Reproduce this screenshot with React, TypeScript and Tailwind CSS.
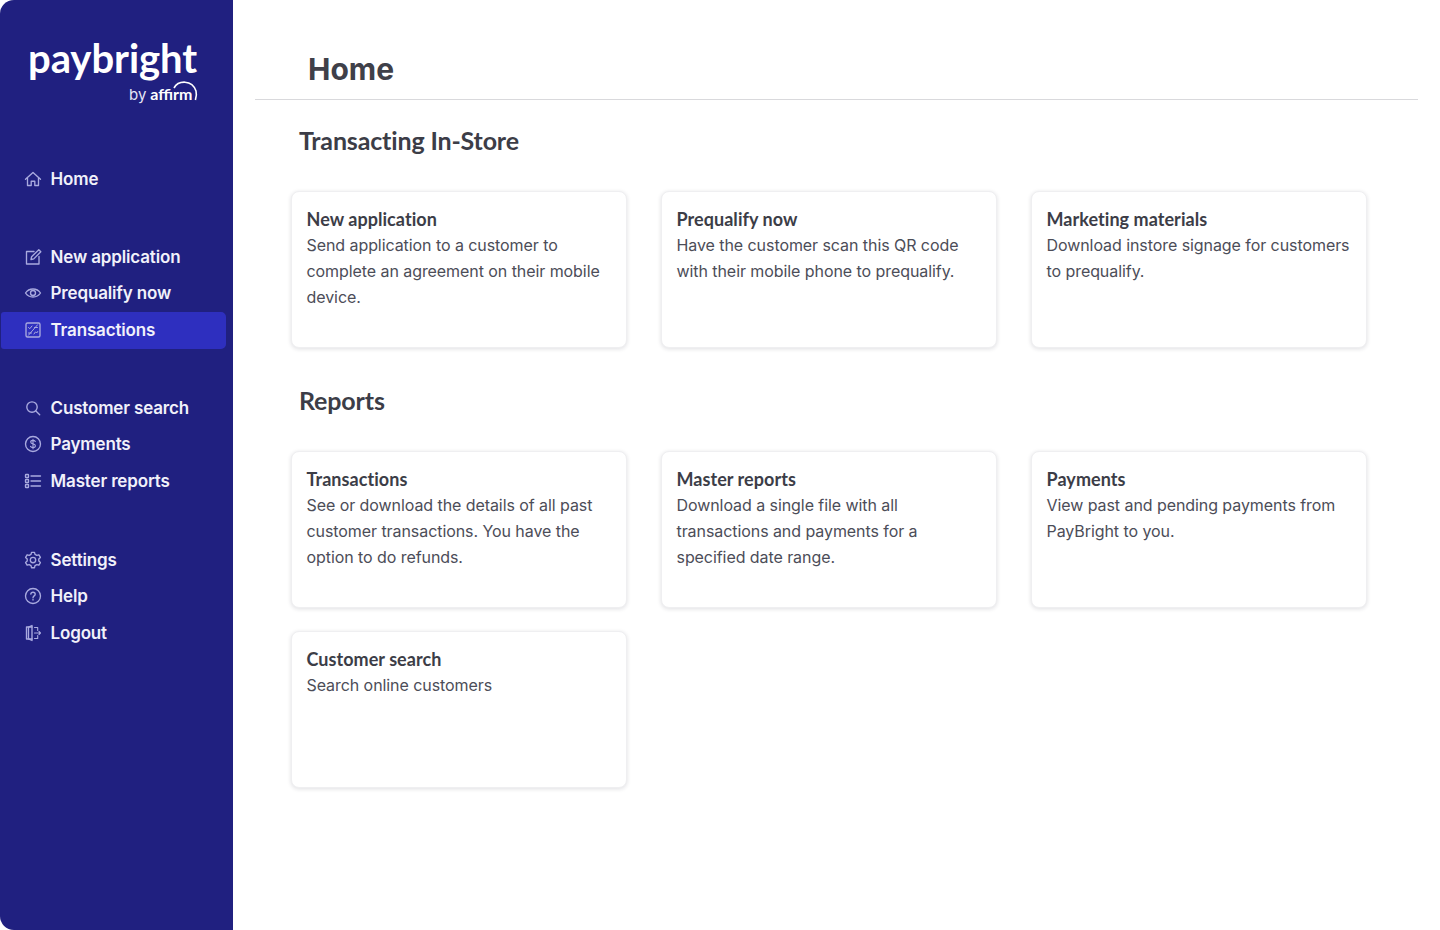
import React from 'react';

const sans = "font-['Inter','Liberation_Sans',sans-serif]";

// outline icons redrawn from the sidebar, 18px box
function NavIcon({ name }: { name: string }) {
  const paths: Record<string, React.ReactNode> = {
    home: (
      <>
        <path d="M1.500 9.200 9 2.500l7.500 6.700" />
        <path d="M3.500 8v7.500h3.700v-4.300h3.600v4.300h3.700V8" />
      </>
    ),
    edit: (
      <>
        <path d="M10 3.500H2.500v12.500h12.500V8.500" />
        <path d="M7 11.500l.6-2.800 7.200-7 2 2-7 7.200z" />
      </>
    ),
    eye: (
      <>
        <path d="M1.500 9C3.300 6.300 6 5 9 5s5.700 1.300 7.500 4c-1.800 2.700-4.500 4-7.500 4s-5.700-1.300-7.500-4z" />
        <circle cx="9" cy="9" r="2.500" />
      </>
    ),
    chart: (
      <>
        <rect x="2" y="2" width="14" height="14" rx="1.500" />
        <path d="M4.500 6.500l1.300 1.200L8 5M10.500 6.500h3M4.500 12h3M10 13l1.500-2.200 1.200 1.200 1-1.500M13.500 3.800 4.500 14.200" strokeWidth="1" />
      </>
    ),
    search: (
      <>
        <circle cx="8" cy="8" r="5.200" />
        <path d="M11.900 11.900l3.800 3.800" />
      </>
    ),
    dollar: (
      <>
        <circle cx="9" cy="9" r="7.500" />
        <path d="M11.300 6.500C10.800 5.700 10 5.400 9 5.400c-1.300 0-2.300.6-2.300 1.700 0 2.400 4.700 1.200 4.700 3.700 0 1.100-1.100 1.800-2.400 1.800-1 0-2-.4-2.500-1.200M9 4.200v9.600" strokeWidth="1.100" />
      </>
    ),
    list: (
      <>
        <rect x="1.500" y="2.500" width="3" height="3" rx=".6" />
        <rect x="1.500" y="7.500" width="3" height="3" rx=".6" />
        <rect x="1.500" y="12.500" width="3" height="3" rx=".6" />
        <path d="M7 4h9.500M7 9h9.500M7 14h9.500" />
      </>
    ),
    gear: (
      <>
        <circle cx="9" cy="9" r="2.700" />
        <path d="M7.500 1.300h3l.5 2.100 1.800 1 2.100-.6 1.500 2.600-1.600 1.500v2.200l1.600 1.500-1.500 2.600-2.100-.6-1.800 1-.5 2.100h-3l-.5-2.100-1.800-1-2.100.6-1.500-2.600 1.600-1.500V7.900L1.600 6.400l1.500-2.600 2.100.6 1.800-1z" />
      </>
    ),
    help: (
      <>
        <circle cx="9" cy="9" r="7.500" />
        <path d="M6.800 7.100C6.900 5.900 7.900 5.200 9 5.200c1.300 0 2.200.8 2.200 2 0 1.700-2.200 1.700-2.200 3.500" />
        <path d="M9 12.500v.6" />
      </>
    ),
    logout: (
      <>
        <path d="M8 3H2.500v12H8" />
        <path d="M8 1.500v15l-3.500-1.600V3.100z" />
        <path d="M10.500 3.500h3.200V6.500M13.700 11.500v3h-3.200M10.500 9h6M15 7.500 16.500 9 15 10.500" strokeWidth="1.100" />
      </>
    ),
  };
  return (
    <svg viewBox="0 0 18 18" fill="none" stroke="currentColor" strokeWidth="1.350" strokeLinecap="round" strokeLinejoin="round" className="-mt-[1px] h-[18px] w-[18px] shrink-0 text-[#a9aadf]">
      {paths[name]}
    </svg>
  );
}

function NavItem({ icon, label, active }: { icon: string; label: string; active?: boolean }) {
  return (
    <a className={`flex h-[36.5px] items-center gap-[8.5px] rounded-r-[5px] rounded-l-[3px] text-[17px] font-semibold tracking-[-0.15px] text-[#f1f1fa] ${active ? 'bg-[#2e2fbf] pl-[23px]' : 'pl-[24px]'}`}>
      <NavIcon name={icon} />
      {label}
    </a>
  );
}

function Card({ title, body }: { title: string; body: string[] }) {
  return (
    <div className="h-[157px] rounded-[8px] border border-[#efeff1] bg-white px-[14.5px] pt-[14px] shadow-[0_1px_4px_rgba(30,30,50,0.14)]">
      <div className="font-['Lato','Inter',sans-serif] text-[18px] leading-[26px] font-bold tracking-[0.05px] text-[#3c3d47]">{title}</div>
      {body.map((line) => (
        <div key={line} className="text-[16px] leading-[26px] tracking-[-0.07px] whitespace-nowrap text-[#4c4d58]">
          {line}
        </div>
      ))}
    </div>
  );
}

export default function App() {
  return (
    <div className={`flex h-[930px] w-[1440px] overflow-hidden rounded-[14px] bg-white ${sans}`}>
      <aside className="flex w-[233px] shrink-0 flex-col bg-[#202080] pr-[7px]">
        <div className="relative h-[161px]">
          <div className="absolute top-[33px] left-[28px] font-['Lato',sans-serif] text-[40px] leading-[50px] font-bold tracking-[-0.05px] text-white">paybright</div>
          <div className="absolute top-[85px] left-[129px] flex items-baseline gap-[4px] text-[15px] leading-[18px] text-[#e6e6f5]">
            <span>by</span>
            <span className="font-['Lato',sans-serif] text-[16px] font-bold text-white">affirm</span>
          </div>
          <svg viewBox="0 0 34 24" fill="none" stroke="white" strokeWidth="1.600" className="absolute top-[79px] left-[165px] h-[24px] w-[34px]">
            <path d="M9 9C13 1.500 27 0 31 12c.8 3 .4 6-.6 9" />
          </svg>
        </div>
        <nav className="flex flex-col">
          <NavItem icon="home" label="Home" />
          <div className="mt-[41.5px] flex flex-col">
            <NavItem icon="edit" label="New application" />
            <NavItem icon="eye" label="Prequalify now" />
            <div className="pl-[1px]">
              <NavItem icon="chart" label="Transactions" active />
            </div>
          </div>
          <div className="mt-[41.5px] flex flex-col">
            <NavItem icon="search" label="Customer search" />
            <NavItem icon="dollar" label="Payments" />
            <NavItem icon="list" label="Master reports" />
          </div>
          <div className="mt-[42.5px] flex flex-col">
            <NavItem icon="gear" label="Settings" />
            <NavItem icon="help" label="Help" />
            <NavItem icon="logout" label="Logout" />
          </div>
        </nav>
      </aside>

      <main className="flex-1 pr-[22px] pl-[22px]">
        <header className="h-[100px] border-b border-[#d9d9dc] pt-[49px] pl-[53px]">
          <h1 className="text-[30px] leading-[40px] font-bold text-[#3f4049]">Home</h1>
        </header>
        <div className="pl-[36px]">
          <h2 className="mt-[22px] pl-[8px] font-['Lato','Inter',sans-serif] text-[25px] leading-[36px] font-bold tracking-[-0.15px] text-[#3c3d47]">Transacting In-Store</h2>
          <div className="mt-[33px] grid w-[1076px] grid-cols-3 gap-x-[34px] gap-y-[23px]">
            <Card title="New application" body={['Send application to a customer to', 'complete an agreement on their mobile', 'device.']} />
            <Card title="Prequalify now" body={['Have the customer scan this QR code', 'with their mobile phone to prequalify.']} />
            <Card title="Marketing materials" body={['Download instore signage for customers', 'to prequalify.']} />
          </div>
          <h2 className="mt-[34px] pl-[8px] font-['Lato','Inter',sans-serif] text-[25px] leading-[36px] font-bold tracking-[-0.15px] text-[#3c3d47]">Reports</h2>
          <div className="mt-[33px] grid w-[1076px] grid-cols-3 gap-x-[34px] gap-y-[23px]">
            <Card title="Transactions" body={['See or download the details of all past', 'customer transactions. You have the', 'option to do refunds.']} />
            <Card title="Master reports" body={['Download a single file with all', 'transactions and payments for a', 'specified date range.']} />
            <Card title="Payments" body={['View past and pending payments from', 'PayBright to you.']} />
            <Card title="Customer search" body={['Search online customers']} />
          </div>
        </div>
      </main>
    </div>
  );
}
